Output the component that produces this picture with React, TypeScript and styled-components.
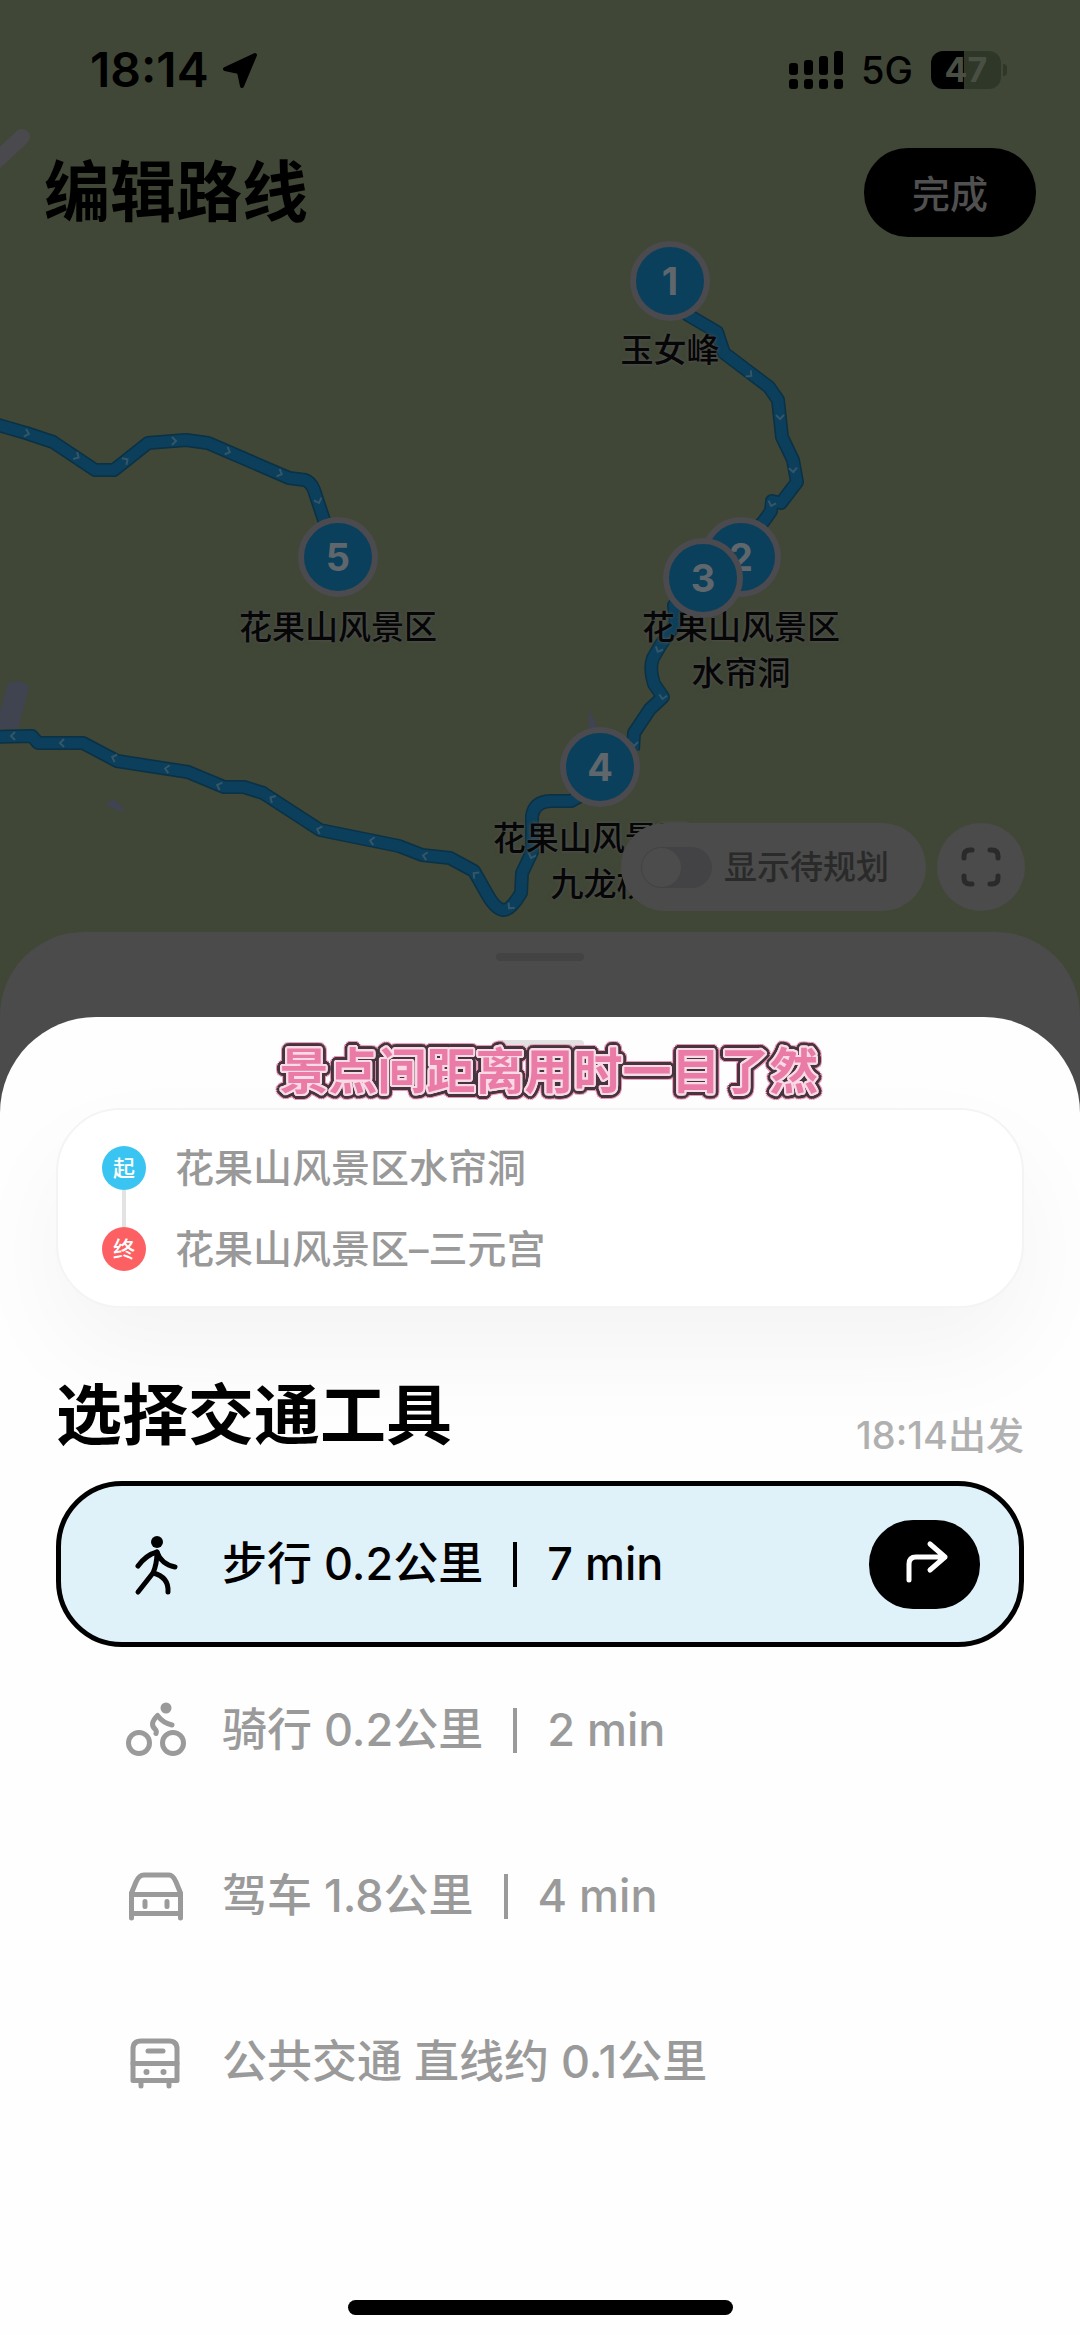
import React, { useState } from "react";
import styled, { createGlobalStyle, css } from "styled-components";

const GlobalStyle = createGlobalStyle`
  *, *::before, *::after { box-sizing: border-box; }
  body {
    margin: 0;
    background: #fefefe;
    color: #000;
    font-family: Inter, "Noto Sans CJK SC", sans-serif;
  }
  h1, h2, p, ul, ol { margin: 0; padding: 0; }
  button { border: 0; padding: 0; font: inherit; color: inherit; background: none; cursor: pointer; }
`;

const Screen = styled.div`
  display: flex;
  flex-direction: column;
  min-height: 100vh;
`;

/* ---------- map ---------- */

const MapArea = styled.section`
  position: relative;
  display: flex;
  flex-direction: column;
  height: 1113px;
  overflow: hidden;
  background: #404736;
`;

const MapCanvas = styled.div`
  position: absolute;
  top: 0;
  left: 50%;
  width: 1080px;
  height: 932px;
  margin-left: -540px;
`;

const MapDrawing = styled.svg`
  display: block;
`;

const Pin = styled.div<{ $x: number; $y: number }>`
  position: absolute;
  left: ${(p) => p.$x - 40}px;
  top: ${(p) => p.$y - 40}px;
  display: grid;
  place-items: center;
  width: 80px;
  height: 80px;
  border: 6px solid #4b4a4f;
  border-radius: 50%;
  background: #0b405c;
  color: #60676c;
  font-size: 38px;
  font-weight: 700;
  line-height: 40px;
`;

const PinLabel = styled.p<{ $x: number; $y: number }>`
  position: absolute;
  left: ${(p) => p.$x - 120}px;
  top: ${(p) => p.$y - 23}px;
  width: 240px;
  font-size: 33px;
  font-weight: 500;
  line-height: 46px;
  text-align: center;
  color: #060606;
  text-shadow: 0 0 2px #505050, 0 0 4px #505050;
`;

const StatusBar = styled.div`
  position: relative;
  display: flex;
  align-items: center;
  justify-content: space-between;
  height: 140px;
  padding: 0 73px 0 90px;
`;

const StatusGroup = styled.div<{ $gap: number }>`
  display: flex;
  align-items: center;
  gap: ${(p) => p.$gap}px;
`;

const Clock = styled.span`
  font-size: 48px;
  font-weight: 600;
  line-height: 56px;
`;

const Network = styled.span`
  font-size: 38px;
  font-weight: 500;
  line-height: 48px;
`;

const Battery = styled.div`
  display: flex;
  align-items: center;
  gap: 2px;
`;

const BatteryBody = styled.span`
  display: grid;
  place-items: center;
  width: 70px;
  height: 38px;
  border-radius: 12px;
  background: linear-gradient(90deg, #000 47%, #2f3728 47%);
  color: #4a4f44;
  font-size: 34px;
  font-weight: 700;
  line-height: 38px;
`;

const BatteryTip = styled.span`
  width: 4px;
  height: 12px;
  border-radius: 0 4px 4px 0;
  background: #2f3728;
`;

const Header = styled.header`
  position: relative;
  display: flex;
  align-items: center;
  justify-content: space-between;
  height: 104px;
  padding: 0 44px;
`;

const Title = styled.h1`
  font-size: 66px;
  font-weight: 600;
  line-height: 88px;
`;

const DoneButton = styled.button`
  width: 172px;
  height: 89px;
  padding-bottom: 2px;
  border-radius: 44px;
  background: #000;
  color: #505050;
  font-size: 38px;
  font-weight: 500;
`;

const MapControls = styled.div`
  position: relative;
  display: flex;
  justify-content: flex-end;
  gap: 11px;
  margin-top: auto;
  padding: 0 55px 21px;
`;

const PendingToggle = styled.label`
  display: flex;
  align-items: center;
  gap: 12px;
  height: 88px;
  padding: 0 37px 0 20px;
  border-radius: 44px;
  background: #4b4b4b;
  color: #2a2a2a;
  font-size: 33px;
  font-weight: 500;
  line-height: 46px;
`;

const Switch = styled.input`
  appearance: none;
  display: flex;
  align-items: center;
  width: 71px;
  height: 41px;
  margin: 0;
  border-radius: 21px;
  background: #434345;
  &::before {
    content: "";
    width: 39px;
    height: 39px;
    margin: 0 1px;
    border-radius: 50%;
    background: #4c4c4c;
  }
  &:checked {
    justify-content: flex-end;
    background: #0c3c56;
  }
`;

const RoundButton = styled.button`
  display: grid;
  place-items: center;
  width: 88px;
  height: 88px;
  border-radius: 50%;
  background: #4b4b4b;
`;

const BackSheet = styled.div`
  position: relative;
  height: 181px;
  padding-top: 21px;
  border-radius: 84px 84px 0 0;
  background: #4b4b4b;
`;

const Grabber = styled.div<{ $color: string }>`
  width: 88px;
  height: 8px;
  margin: 0 auto;
  border-radius: 4px;
  background: ${(p) => p.$color};
`;

/* ---------- transport sheet ---------- */

const Sheet = styled.main`
  position: relative;
  display: flex;
  flex-direction: column;
  flex: 1;
  margin-top: -96px;
  padding: 23px 56px 20px;
  border-radius: 96px 96px 0 0;
  background: #fefefe;
`;

/* Offsets around a circle, so that one colour outlines the glyphs evenly. */
const ring = (radius: number, color: string) =>
  Array.from({ length: 20 }, (_, i) => {
    const a = (i / 20) * Math.PI * 2;
    return `${(Math.cos(a) * radius).toFixed(1)}px ${(Math.sin(a) * radius).toFixed(1)}px 0 ${color}`;
  }).join(", ");

const Caption = styled.p`
  position: relative;
  z-index: 1;
  margin-top: -5px;
  padding-left: 18px;
  font-size: 49px;
  font-weight: 700;
  line-height: 58px;
  text-align: center;
  color: #ea7ba7;
  text-shadow: ${ring(2, "#f8dbe5")}, ${ring(5, "#46353f")}, ${ring(6, "#ee94b6")};
`;

const RouteCard = styled.ol`
  display: flex;
  flex-direction: column;
  gap: 37px;
  margin-top: 7px;
  padding: 36px 44px 35px;
  border: 2px solid #f4f4f4;
  border-radius: 64px;
  background: #fff;
  box-shadow: 0 44px 100px rgba(0, 0, 0, 0.045);
  list-style: none;
`;

const Stop = styled.li`
  display: flex;
  align-items: center;
  gap: 29px;
  height: 44px;
  color: #999;
  font-size: 39px;
  font-weight: 500;
  line-height: 44px;
`;

const StopBadge = styled.span<{ $color: string; $linked?: boolean }>`
  position: relative;
  display: grid;
  place-items: center;
  width: 44px;
  height: 44px;
  border-radius: 50%;
  background: ${(p) => p.$color};
  color: #fff;
  font-size: 22px;
  font-weight: 500;
  line-height: 30px;
  ${(p) =>
    p.$linked &&
    css`
      &::after {
        content: "";
        position: absolute;
        top: 100%;
        left: 20px;
        width: 4px;
        height: 37px;
        background: #e3e3e3;
      }
    `}
`;

const SectionHead = styled.div`
  display: flex;
  align-items: flex-end;
  justify-content: space-between;
  margin: 67px 0 26px;
`;

const SectionTitle = styled.h2`
  font-size: 66px;
  font-weight: 600;
  line-height: 80px;
`;

const Departure = styled.span`
  color: #b0b0b0;
  font-size: 38px;
  font-weight: 500;
  line-height: 40px;
`;

const Options = styled.ul`
  list-style: none;
`;

const Option = styled.li<{ $active: boolean }>`
  display: flex;
  align-items: center;
  height: 166px;
  padding-right: 39px;
  border: 5px solid ${(p) => (p.$active ? "#000" : "transparent")};
  border-radius: 66px;
  background: ${(p) => (p.$active ? "#dff2fa" : "transparent")};
  color: ${(p) => (p.$active ? "#000" : "#9a9a9a")};
`;

const OptionButton = styled.button`
  display: flex;
  flex: 1;
  align-items: center;
  height: 100%;
  padding-left: 65px;
  font-size: 45px;
  font-weight: 500;
  line-height: 60px;
  text-align: left;
`;

const OptionText = styled.span`
  margin-left: 36px;
`;

const Divider = styled.span`
  width: 4px;
  height: 45px;
  margin: 0 30px;
  background: currentColor;
`;

const GoButton = styled.button`
  display: grid;
  place-items: center;
  width: 111px;
  height: 89px;
  border-radius: 44px;
  background: #000;
`;

const Glyph = styled.svg`
  display: block;
  flex: none;
  overflow: visible;
  fill: none;
  stroke: currentColor;
  stroke-width: 5;
  stroke-linecap: round;
  stroke-linejoin: round;
`;

const HomeBar = styled.div`
  width: 385px;
  height: 15px;
  margin: auto auto 0;
  border-radius: 8px;
  background: #000;
`;

/* ---------- drawings ---------- */

const WalkIcon = () => (
  <Glyph width="60" height="60" viewBox="0 0 60 60" strokeWidth="6" aria-hidden="true">
    <circle cx="31" cy="8" r="6" fill="currentColor" stroke="none" />
    <path d="M12 32Q20 21 31 18Q35 30 49 33" />
    <path d="M31 18Q31 30 27 39L12 58" />
    <path d="M27 39Q43 43 42 58" />
  </Glyph>
);

const BikeIcon = () => (
  <Glyph width="60" height="60" viewBox="0 0 60 60" aria-hidden="true">
    <circle cx="13" cy="43" r="10.500" />
    <circle cx="47" cy="43" r="10.500" />
    <circle cx="40" cy="8" r="5.500" fill="currentColor" stroke="none" />
    <path d="M46 25Q37 23 31.500 15.500Q23 24 29 29Q31 31 30 33.500" />
  </Glyph>
);

const CarIcon = () => (
  <Glyph width="60" height="60" viewBox="0 0 60 60" aria-hidden="true">
    <path d="M5.500 52V27L10 16Q13 9 18 9H43Q47 9 50 16L54.500 27V52" />
    <path d="M5.500 28.500H54.500M5.500 47.500H54.500M19 35.500V40.500M41 35.500V40.500" />
  </Glyph>
);

const BusIcon = () => (
  <Glyph width="60" height="60" viewBox="0 0 60 60" aria-hidden="true">
    <path d="M7 48.500V17Q7 9 15 9H43Q51 9 51 17V48.500Z" />
    <path d="M7 31.500H51M22 19H37M15 50V54M43 50V54" />
    <circle cx="20.500" cy="40" r="3" fill="currentColor" stroke="none" />
    <circle cx="37.500" cy="40" r="3" fill="currentColor" stroke="none" />
  </Glyph>
);

const TurnIcon = () => (
  <Glyph width="48" height="48" viewBox="0 0 48 48" color="#fff" aria-hidden="true">
    <path d="M8 40V24Q8 17 15 17H44M29 4L44 17L29 30" />
  </Glyph>
);

const ScanIcon = () => (
  <Glyph width="40" height="40" viewBox="0 0 40 40" color="#2a2a2a" aria-hidden="true">
    <path d="M3 11V9Q3 3 9 3H11M29 3H31Q37 3 37 9V11M37 29V31Q37 37 31 37H29M11 37H9Q3 37 3 31V29" />
  </Glyph>
);

const LocationIcon = () => (
  <svg width="36" height="36" viewBox="0 0 36 36" aria-hidden="true">
    <path d="M33 3L3 17L17 20L20 34Z" stroke="#000" strokeWidth="4" strokeLinejoin="round" />
  </svg>
);

const SignalIcon = () => (
  <svg width="54" height="38" viewBox="0 0 54 38" aria-hidden="true">
    {[12, 9, 5, 0].map((top, i) => (
      <g key={top}>
        <rect x={i * 15} y={top} width="9" height={24 - top} rx="3" />
        <rect x={i * 15} y="28" width="9" height="10" rx="3" />
      </g>
    ))}
  </svg>
);

const ROUTES = [
  "M-5 424L26 433L53 442L95 470H114L148 443L186 440L208 443L289 478L305 480Q311 482 314 490L324 520L338 557",
  "M-5 737L32 736L38 743H83L117 761L188 772L224 787L244 787L263 793L320 830L399 846L422 855L450 858L474 871L487 894Q496 910 504 910Q511 910 521 893L522 873L532 852V816Q534 802 550 801H571L600 785",
  "M633 750L634 733L650 709L663 697L654 684Q649 668 653 658L660 646L676 623L674 605L703 578",
  "M742 545L764 521L771 511L772 501L781 503L797 482L793 460L782 437L778 400L769 387L724 353L717 332L688 315L670 285",
];

/* x, y and heading of every direction tick on the routes */
const TICKS: [number, number, number][] = [
  [26, 433, 15], [76, 456, 30], [125, 461, -35], [173, 441, 0], [227, 451, 22], [279, 473, 22], [318, 500, 70],
  [14, 736, 180], [63, 743, 180], [115, 758, 200], [168, 769, 190], [220, 786, 200], [273, 799, 210],
  [320, 830, 200], [373, 841, 190], [426, 856, 190], [476, 875, 220], [511, 906, 130], [532, 855, 110],
  [659, 649, 115], [663, 696, 100], [634, 743, 90],
  [749, 374, 40], [780, 416, 88], [793, 469, 85], [772, 503, 110],
];

const RouteMap = () => (
  <MapDrawing width="1080" height="932" viewBox="0 0 1080 932" aria-hidden="true">
    <path d="M-6 163L22 137" stroke="#4a494d" strokeWidth="16" strokeLinecap="round" />
    <path d="M8 683Q22 678 29 687L18 729H0V712Z" fill="#3f4450" />
    <path d="M105 804L114 799L126 810L118 811Z" fill="#3f4450" />
    <path d="M589 709L600 732H588Z" fill="#3f4450" />
    <g fill="none" strokeLinejoin="round">
      {ROUTES.map((d) => (
        <path key={d} d={d} stroke="#0a3145" strokeWidth="14" />
      ))}
      {ROUTES.map((d) => (
        <path key={d} d={d} stroke="#0b3f5b" strokeWidth="11" />
      ))}
    </g>
    <g fill="none" stroke="#355668" strokeWidth="2">
      {TICKS.map(([x, y, angle]) => (
        <path key={`${x}-${y}`} d="M-1 -4L3 0L-1 4" transform={`translate(${x} ${y}) rotate(${angle})`} />
      ))}
    </g>
  </MapDrawing>
);

const MODES = [
  { id: "walk", distance: "步行 0.2公里", time: "7 min", Icon: WalkIcon },
  { id: "bike", distance: "骑行 0.2公里", time: "2 min", Icon: BikeIcon },
  { id: "car", distance: "驾车 1.8公里", time: "4 min", Icon: CarIcon },
  { id: "bus", distance: "公共交通 直线约 0.1公里", time: "", Icon: BusIcon },
];

export default function App() {
  const [mode, setMode] = useState("walk");

  return (
    <Screen>
      <GlobalStyle />
      <MapArea>
        <MapCanvas>
          <RouteMap />
          <PinLabel $x={670} $y={350}>玉女峰</PinLabel>
          <PinLabel $x={338} $y={627}>花果山风景区</PinLabel>
          <PinLabel $x={741} $y={627}>花果山风景区<br />水帘洞</PinLabel>
          <PinLabel $x={600} $y={838}>花果山风景区–<br />九龙桥</PinLabel>
          <Pin $x={670} $y={281}>1</Pin>
          <Pin $x={741} $y={557}>2</Pin>
          <Pin $x={703} $y={578}>3</Pin>
          <Pin $x={600} $y={767}>4</Pin>
          <Pin $x={338} $y={557}>5</Pin>
        </MapCanvas>

        <StatusBar>
          <StatusGroup $gap={13}>
            <Clock>18:14</Clock>
            <LocationIcon />
          </StatusGroup>
          <StatusGroup $gap={18}>
            <SignalIcon />
            <Network>5G</Network>
            <Battery>
              <BatteryBody>47</BatteryBody>
              <BatteryTip />
            </Battery>
          </StatusGroup>
        </StatusBar>

        <Header>
          <Title>编辑路线</Title>
          <DoneButton type="button">完成</DoneButton>
        </Header>

        <MapControls>
          <PendingToggle>
            <Switch type="checkbox" />
            显示待规划
          </PendingToggle>
          <RoundButton type="button" aria-label="全屏">
            <ScanIcon />
          </RoundButton>
        </MapControls>

        <BackSheet>
          <Grabber $color="#434343" />
        </BackSheet>
      </MapArea>

      <Sheet>
        <Grabber $color="#e2e1e2" />
        <Caption>景点间距离用时一目了然</Caption>

        <RouteCard>
          <Stop>
            <StopBadge $color="#3ac4f2" $linked>起</StopBadge>
            花果山风景区水帘洞
          </Stop>
          <Stop>
            <StopBadge $color="#fd6062">终</StopBadge>
            花果山风景区–三元宫
          </Stop>
        </RouteCard>

        <SectionHead>
          <SectionTitle>选择交通工具</SectionTitle>
          <Departure>18:14出发</Departure>
        </SectionHead>

        <Options>
          {MODES.map(({ id, distance, time, Icon }) => (
            <Option key={id} $active={id === mode}>
              <OptionButton type="button" aria-pressed={id === mode} onClick={() => setMode(id)}>
                <Icon />
                <OptionText>{distance}</OptionText>
                {time && (
                  <>
                    <Divider />
                    <span>{time}</span>
                  </>
                )}
              </OptionButton>
              {id === mode && (
                <GoButton type="button" aria-label="开始导航">
                  <TurnIcon />
                </GoButton>
              )}
            </Option>
          ))}
        </Options>

        <HomeBar />
      </Sheet>
    </Screen>
  );
}
